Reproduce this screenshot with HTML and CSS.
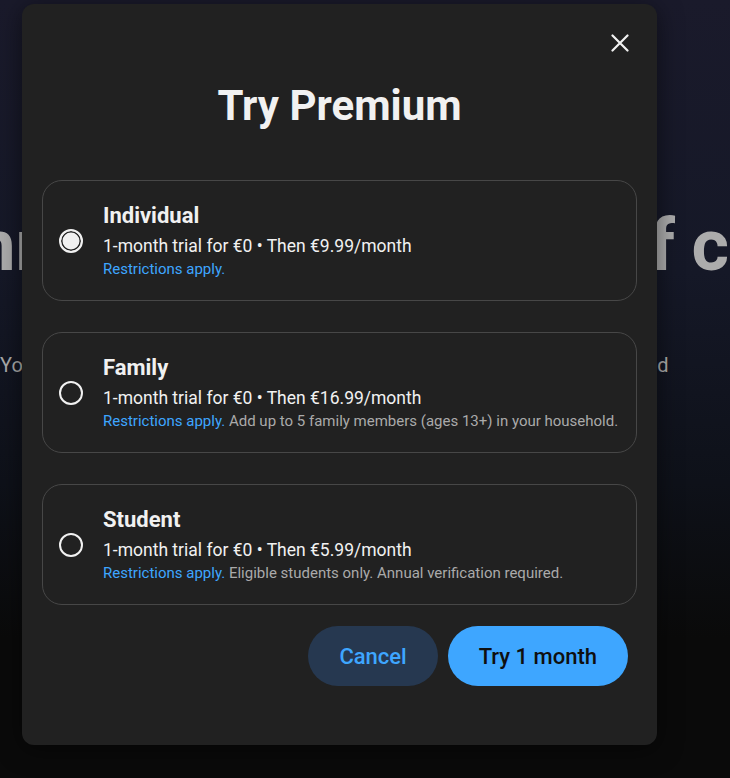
FILE: index.html
```html
<!DOCTYPE html>
<html lang="en">
<head>
    <meta charset="UTF-8">
    <meta name="viewport" content="width=device-width, initial-scale=1.0">
    <title>Try Premium</title>
    <link rel="stylesheet" href="styles.css">
</head>
<body>
    <!-- Page behind the dialog -->
    <div class="page">
        <h1 class="page-title">Annual plans, and all of content</h1>
        <p class="page-text">You can watch and listen without ads, offline and in the background too and</p>
    </div>

    <!-- Premium dialog -->
    <div class="dialog">
        <button class="close" aria-label="Close">
            <svg width="18" height="18" viewBox="0 0 18 18">
                <path d="M1.5 1.5 L16.5 16.5 M16.5 1.5 L1.5 16.5" stroke="#f1f1f1" stroke-width="2.2" stroke-linecap="round"/>
            </svg>
        </button>

        <h2 class="dialog-title">Try Premium</h2>

        <div class="plans">
            <label class="plan">
                <input type="radio" name="plan" class="radio" checked>
                <div class="plan-info">
                    <div class="plan-name">Individual</div>
                    <div class="plan-price">1-month trial for €0 • Then €9.99/month</div>
                    <div class="plan-note"><span class="link">Restrictions apply.</span></div>
                </div>
            </label>

            <label class="plan">
                <input type="radio" name="plan" class="radio">
                <div class="plan-info">
                    <div class="plan-name">Family</div>
                    <div class="plan-price">1-month trial for €0 • Then €16.99/month</div>
                    <div class="plan-note"><span class="link">Restrictions apply.</span> Add up to 5 family members (ages 13+) in your household.</div>
                </div>
            </label>

            <label class="plan">
                <input type="radio" name="plan" class="radio">
                <div class="plan-info">
                    <div class="plan-name">Student</div>
                    <div class="plan-price">1-month trial for €0 • Then €5.99/month</div>
                    <div class="plan-note"><span class="link">Restrictions apply.</span> Eligible students only. Annual verification required.</div>
                </div>
            </label>
        </div>

        <div class="actions">
            <button class="btn btn-cancel">Cancel</button>
            <button class="btn btn-primary">Try 1 month</button>
        </div>
    </div>
</body>
</html>
```

FILE: styles.css
```css
body {
    margin: 0;
    height: 100vh;
    position: relative;
    overflow: hidden;
    font-family: Roboto, "Liberation Sans", sans-serif;
    background: linear-gradient(180deg, #1a1a2b 0%, #151827 35%, #0e1119 62%, #0a0a0a 82%);
}

/* page content, mostly hidden by the dialog */
.page {
    padding-top: 206px;
}

.page-title {
    margin: 0 0 0 -72px;
    font-size: 72px;
    line-height: 80px;
    font-weight: 700;
    word-spacing: -1.5px;
    color: #acacac;
    white-space: nowrap;
}

.page-text {
    margin: 65px 0 0;
    font-size: 20px;
    line-height: 28px;
    color: #aaa;
    white-space: nowrap;
}

/* dialog */
.dialog {
    position: absolute;
    left: 22px;
    top: 4px;
    width: 635px;
    height: 741px;
    box-sizing: border-box;
    padding: 78px 20px 0;
    background-color: #212121;
    border-radius: 12px;
    box-shadow: 0 4px 24px rgba(0, 0, 0, 0.5);
}

.close {
    position: absolute;
    top: 21px;
    right: 19px;
    width: 36px;
    height: 36px;
    padding: 0;
    border: none;
    background: none;
    display: flex;
    align-items: center;
    justify-content: center;
    cursor: pointer;
}

.dialog-title {
    margin: 0;
    text-align: center;
    font-size: 42px;
    line-height: 48px;
    font-weight: 700;
    color: #f1f1f1;
}

.plans {
    margin-top: 50px;
    display: flex;
    flex-direction: column;
    gap: 31px;
}

.plan {
    display: flex;
    align-items: center;
    gap: 20px;
    height: 121px;
    box-sizing: border-box;
    padding: 0 16px;
    border: 1px solid #474747;
    border-radius: 20px;
    cursor: pointer;
}

.radio {
    appearance: none;
    -webkit-appearance: none;
    margin: 0;
    flex-shrink: 0;
    width: 24px;
    height: 24px;
    border: 2px solid #f1f1f1;
    border-radius: 50%;
    box-sizing: border-box;
}

.radio:checked {
    background-color: #f1f1f1;
    box-shadow: inset 0 0 0 1.5px #212121;
}

.plan-name {
    font-size: 22px;
    line-height: 28px;
    font-weight: 700;
    color: #f1f1f1;
}

.plan-price {
    margin-top: 4px;
    font-size: 17.5px;
    line-height: 24px;
    color: #f1f1f1;
}

.plan-note {
    margin-top: 1px;
    font-size: 15px;
    line-height: 20px;
    color: #aaa;
}

.link {
    color: #3ea6ff;
}

.actions {
    margin-top: 21px;
    padding-right: 9px;
    display: flex;
    justify-content: flex-end;
    gap: 10px;
}

.btn {
    height: 60px;
    padding: 0 31px;
    border: none;
    border-radius: 30px;
    font-family: Roboto, "Liberation Sans", sans-serif;
    font-size: 22px;
    font-weight: 500;
    cursor: pointer;
}

.btn-cancel {
    background-color: #263850;
    color: #3ea6ff;
}

.btn-primary {
    background-color: #3ea6ff;
    color: #0f0f0f;
}
```
